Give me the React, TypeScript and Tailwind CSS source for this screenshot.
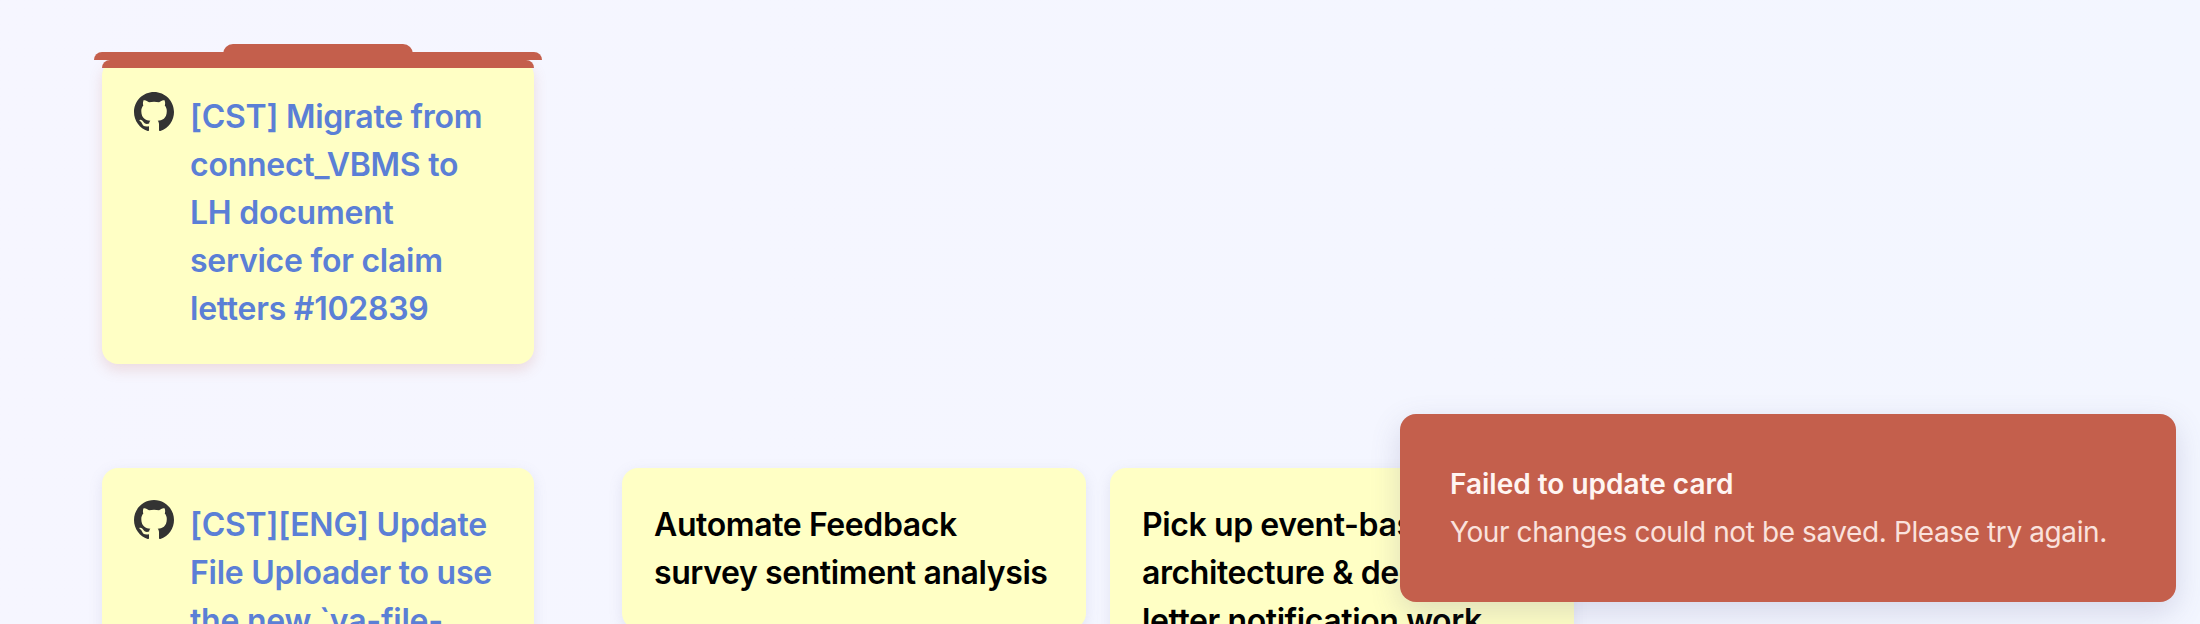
const GITHUB_PATH =
  'M8 0C3.58 0 0 3.58 0 8c0 3.54 2.29 6.53 5.47 7.59.4.07.55-.17.55-.38 0-.19-.01-.82-.01-1.49-2.01.37-2.53-.49-2.69-.94-.09-.23-.48-.94-.82-1.13-.28-.15-.68-.52-.01-.53.63-.01 1.08.58 1.23.82.72 1.21 1.87.87 2.33.66.07-.52.28-.87.51-1.07-1.78-.2-3.64-.89-3.64-3.95 0-.87.31-1.59.82-2.15-.08-.2-.36-1.02.08-2.12 0 0 .67-.21 2.2.82.64-.18 1.32-.27 2-.27.68 0 1.36.09 2 .27 1.53-1.04 2.2-.82 2.2-.82.44 1.1.16 1.92.08 2.12.51.56.82 1.27.82 2.15 0 3.07-1.87 3.75-3.65 3.95.29.25.54.73.54 1.48 0 1.07-.01 1.93-.01 2.2 0 .21.15.46.55.38A8.013 8.013 0 0016 8c0-4.42-3.58-8-8-8z'

function GithubIcon() {
  return (
    <svg viewBox="0 0 16 16" className="w-10 h-10 shrink-0 fill-[#333333]">
      <path fillRule="evenodd" d={GITHUB_PATH} />
    </svg>
  )
}

function GithubCard({ title, folder }: { title: string; folder?: boolean }) {
  return (
    <div className={`relative w-[432px] shrink-0 rounded-2xl bg-[#ffffc5] p-8 flex gap-4 ${folder ? 'shadow-[0_6px_14px_rgba(196,95,76,0.18)]' : 'shadow-[0_4px_14px_rgba(120,120,170,0.15)]'}`}>
      {folder && (
        <>
          <div className="absolute left-[121px] top-[-16px] w-[190px] h-[10px] rounded-t-2xl bg-[#c45f4c]" />
          <div className="absolute left-[-8px] top-[-8px] w-[448px] h-2 rounded-t-lg bg-[#c45f4c]" />
          <div className="absolute left-0 top-0 w-[432px] h-2 rounded-t-lg bg-[#c45f4c]" />
        </>
      )}
      <GithubIcon />
      <a className="text-[32px] leading-[48px] font-semibold tracking-[-0.25px] text-[#5b7fd6] mt-[1px] -mb-[1px]">{title}</a>
    </div>
  )
}

function TextCard({ title }: { title: string }) {
  return (
    <div className="w-[464px] shrink-0 rounded-2xl bg-[#ffffc5] p-8 shadow-[0_4px_14px_rgba(120,120,170,0.15)]">
      <div className="text-[32px] leading-[48px] font-semibold text-black mt-[1px] tracking-[-0.4px]">{title}</div>
    </div>
  )
}

export default function App() {
  return (
    <div className="relative h-[624px] overflow-hidden bg-gradient-to-r from-[#f6f6ff] to-[#f3f6ff] pl-[102px] pt-[60px]" style={{ fontFamily: 'Inter, sans-serif' }}>
      <GithubCard folder title="[CST] Migrate from connect_VBMS to LH document service for claim letters #102839" />

      <div className="flex items-start gap-[88px] mt-[104px]">
        <GithubCard title="[CST][ENG] Update File Uploader to use the new `va-file-input` component" />
        <div className="flex items-start gap-6">
          <TextCard title="Automate Feedback survey sentiment analysis" />
          <TextCard title="Pick up event-based architecture & decision letter notification work" />
        </div>
      </div>

      {/* Toast */}
      <div className="absolute right-6 top-[414px] w-[776px] h-[188px] rounded-2xl bg-[#c45f4c] px-[50px] pt-[52px] shadow-[0_10px_30px_rgba(90,90,140,0.2)]">
        <div className="text-[28px] leading-9 font-semibold text-[#fff5f2]">Failed to update card</div>
        <div className="text-[28px] leading-9 mt-3 tracking-[-0.4px] text-[#fae2dd]">Your changes could not be saved. Please try again.</div>
      </div>
    </div>
  )
}
